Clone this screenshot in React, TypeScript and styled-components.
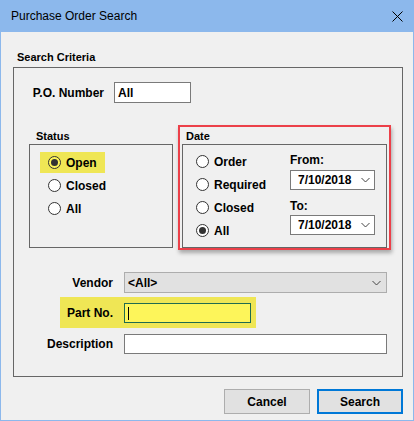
import styled, { createGlobalStyle } from 'styled-components';

const Global = createGlobalStyle`
  html, body {
    margin: 0;
    padding: 0;
    background: #f0f0f0;
  }
  * {
    box-sizing: border-box;
  }
`;

const Window = styled.div`
  width: 414px;
  height: 421px;
  background: #f0f0f0;
  border: 1px solid #8cb8ec;
  border-top: none;
  display: flex;
  flex-direction: column;
  font-family: 'Liberation Sans', Arial, sans-serif;
  font-weight: bold;
  font-size: 11px;
  color: #000;
`;

const TitleBar = styled.div`
  height: 32px;
  flex-shrink: 0;
  background: #8cb8ec;
  display: flex;
  align-items: center;
  justify-content: space-between;
  padding: 0 10px 0 10px;
  font-family: 'Liberation Sans', Arial, sans-serif;
  font-weight: normal;
  font-size: 12px;
`;

const Body = styled.div`
  display: flex;
  flex-direction: column;
  padding-top: 18px;
`;

const SectionLabel = styled.div`
  line-height: 14px;
  height: 14px;
  margin-left: 16px;
  white-space: nowrap;
`;

const Criteria = styled.div`
  margin: 3px 0 0 12px;
  width: 390px;
  height: 310px;
  border: 1px solid #666;
  display: flex;
  flex-direction: column;
`;

const PoRow = styled.div`
  display: flex;
  align-items: center;
  gap: 10px;
  margin: 14px 0 0 23px;
`;

const TextBox = styled.div<{ $w: number; $h?: number; $focus?: boolean }>`
  width: ${(p) => p.$w}px;
  height: ${(p) => p.$h ?? 20}px;
  background: ${(p) => (p.$focus ? '#fdf55a' : '#fff')};
  border: 1px solid ${(p) => (p.$focus ? '#1f6b4f' : '#7a7a7a')};
  display: flex;
  align-items: center;
  padding-left: 3px;
  font-size: 12px;
`;

const Caret = styled.span`
  width: 1px;
  height: 13px;
  background: #000;
`;

const MiddleRow = styled.div`
  display: flex;
  align-items: flex-start;
  gap: 5px;
  margin: 22px 0 0 15px;
`;

const StatusCol = styled.div`
  width: 144px;
  padding-top: 4px;
  display: flex;
  flex-direction: column;
`;

const GroupLabel = styled.div<{ $indent: number }>`
  line-height: 14px;
  height: 14px;
  margin: 0 0 1px ${(p) => p.$indent}px;
`;

const GroupBox = styled.div<{ $w: number }>`
  width: ${(p) => p.$w}px;
  height: 104px;
  border: 1px solid #666;
  display: flex;
`;

const RedFrame = styled.div`
  width: 213px;
  border: 2px solid #ec4049;
  padding: 2px 2px 0 2px;
  box-shadow: 1px 3px 4px rgba(0, 0, 0, 0.3);
  display: flex;
  flex-direction: column;
`;

const Options = styled.div<{ $padL: number; $padT: number; $w?: number }>`
  display: flex;
  flex-direction: column;
  gap: 2px;
  padding: ${(p) => p.$padT}px 0 0 ${(p) => p.$padL}px;
  width: ${(p) => (p.$w ? `${p.$w}px` : 'auto')};
  flex-shrink: 0;
`;

const Option = styled.div<{ $hl?: boolean; $indent: number }>`
  height: 21px;
  align-self: flex-start;
  display: flex;
  align-items: center;
  gap: 5px;
  padding: 0 8px 0 ${(p) => p.$indent}px;
  background: ${(p) => (p.$hl ? '#efe655' : 'transparent')};
  font-size: 12px;
`;

const Radio = styled.span<{ $on?: boolean; $hl?: boolean }>`
  width: 13px;
  height: 13px;
  border-radius: 50%;
  border: 1px solid #333;
  background: ${(p) => (p.$hl ? '#fdf55a' : '#fff')};
  display: flex;
  align-items: center;
  justify-content: center;
  flex-shrink: 0;

  &::after {
    content: '';
    width: 7px;
    height: 7px;
    border-radius: 50%;
    background: ${(p) => (p.$on ? '#333' : 'transparent')};
  }
`;

const DateCol = styled.div`
  display: flex;
  flex-direction: column;
  padding-top: 8px;
`;

const DateLabel = styled.div<{ $gap: number }>`
  line-height: 14px;
  height: 14px;
  margin-bottom: ${(p) => p.$gap}px;
  font-size: 12px;
`;

const Picker = styled.div<{ $mb?: number }>`
  width: 85px;
  height: 20px;
  background: #fff;
  border: 1px solid #7a7a7a;
  display: flex;
  align-items: center;
  justify-content: space-between;
  padding: 0 4px 0 7px;
  margin-bottom: ${(p) => p.$mb ?? 0}px;
  font-size: 12px;
`;

const Combo = styled.div`
  width: 263px;
  height: 21px;
  background: #e1e1e1;
  border: 1px solid #adadad;
  display: flex;
  align-items: center;
  justify-content: space-between;
  padding: 0 5px 0 3px;
  font-size: 12px;
`;

const FormRows = styled.div`
  display: flex;
  flex-direction: column;
  margin: 22px 0 0 26px;
`;

const FormRow = styled.div<{ $mt?: number; $ml?: number }>`
  display: flex;
  align-items: center;
  gap: 11px;
  margin-top: ${(p) => p.$mt ?? 0}px;
  margin-left: ${(p) => p.$ml ?? 0}px;
  align-self: flex-start;
`;

const HighlightRow = styled(FormRow)`
  background: #efe655;
  padding: 6px 5px 5px 0;
`;

const FieldLabel = styled.div<{ $w: number }>`
  width: ${(p) => p.$w}px;
  display: flex;
  justify-content: flex-end;
  white-space: nowrap;
  font-size: 12px;
`;

const Footer = styled.div`
  display: flex;
  justify-content: flex-end;
  gap: 7px;
  margin-top: 12px;
  padding-right: 10px;
`;

const Button = styled.button<{ $default?: boolean }>`
  width: 86px;
  height: 25px;
  background: #e1e1e1;
  border: ${(p) => (p.$default ? '2px solid #0078d7' : '1px solid #adadad')};
  font-family: 'Liberation Sans', Arial, sans-serif;
  font-weight: bold;
  font-size: 12px;
  color: #000;
  padding: 0;
`;

const Chevron = () => (
  <svg width="9" height="6" viewBox="0 0 9 6">
    <polyline points="0.5,1 4.5,5 8.5,1" fill="none" stroke="#444" strokeWidth="1" />
  </svg>
);

const CloseIcon = () => (
  <svg width="11" height="11" viewBox="0 0 11 11">
    <path d="M0.5 0.5 L10.5 10.5 M10.5 0.5 L0.5 10.5" stroke="#000" strokeWidth="1" />
  </svg>
);

const statusOptions = [
  { label: 'Open', on: true, hl: true },
  { label: 'Closed' },
  { label: 'All' },
];

const dateOptions = [
  { label: 'Order' },
  { label: 'Required' },
  { label: 'Closed' },
  { label: 'All', on: true },
];

export default function App() {
  return (
    <>
      <Global />
      <Window>
        <TitleBar>
          <span>Purchase Order Search</span>
          <CloseIcon />
        </TitleBar>
        <Body>
          <SectionLabel>Search Criteria</SectionLabel>
          <Criteria>
            <PoRow>
              <FieldLabel $w={67}>P.O. Number</FieldLabel>
              <TextBox $w={77} $h={21}>All</TextBox>
            </PoRow>

            <MiddleRow>
              <StatusCol>
                <GroupLabel $indent={7}>Status</GroupLabel>
                <GroupBox $w={144}>
                  <Options $padL={10} $padT={7}>
                    {statusOptions.map((o) => (
                      <Option key={o.label} $hl={o.hl} $indent={8}>
                        <Radio $on={o.on} $hl={o.hl} />
                        {o.label}
                      </Option>
                    ))}
                  </Options>
                </GroupBox>
              </StatusCol>

              <RedFrame>
                <GroupLabel $indent={4}>Date</GroupLabel>
                <GroupBox $w={205}>
                  <Options $padL={5} $padT={6} $w={107}>
                    {dateOptions.map((o) => (
                      <Option key={o.label} $indent={8}>
                        <Radio $on={o.on} />
                        {o.label}
                      </Option>
                    ))}
                  </Options>
                  <DateCol>
                    <DateLabel $gap={3}>From:</DateLabel>
                    <Picker $mb={9}>
                      7/10/2018
                      <Chevron />
                    </Picker>
                    <DateLabel $gap={2}>To:</DateLabel>
                    <Picker>
                      7/10/2018
                      <Chevron />
                    </Picker>
                  </DateCol>
                </GroupBox>
              </RedFrame>
            </MiddleRow>

            <FormRows>
              <FormRow>
                <FieldLabel $w={73}>Vendor</FieldLabel>
                <Combo>
                  &lt;All&gt;
                  <Chevron />
                </Combo>
              </FormRow>
              <HighlightRow $mt={4} $ml={20}>
                <FieldLabel $w={53}>Part No.</FieldLabel>
                <TextBox $w={127} $focus>
                  <Caret />
                </TextBox>
              </HighlightRow>
              <FormRow $mt={6}>
                <FieldLabel $w={73}>Description</FieldLabel>
                <TextBox $w={263} />
              </FormRow>
            </FormRows>
          </Criteria>

          <Footer>
            <Button>Cancel</Button>
            <Button $default>Search</Button>
          </Footer>
        </Body>
      </Window>
    </>
  );
}
